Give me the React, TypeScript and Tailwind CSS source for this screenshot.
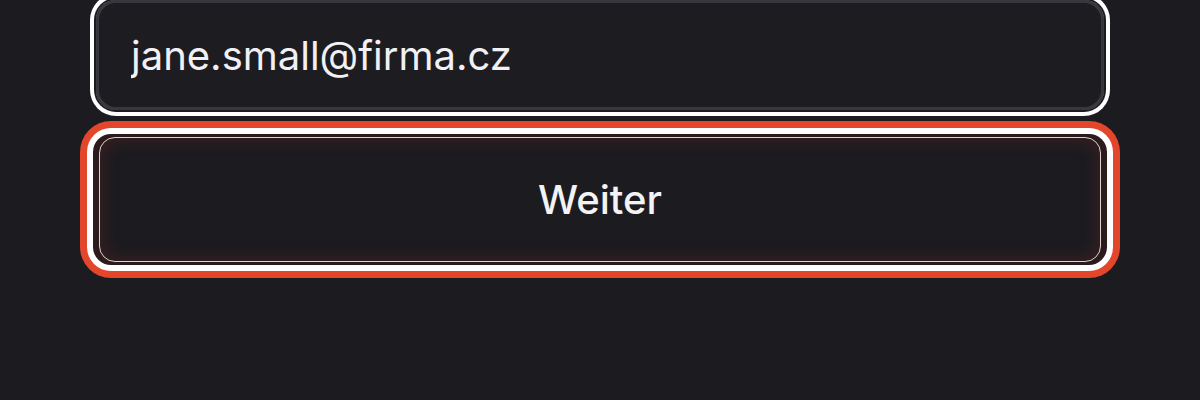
export default function App() {
  return (
    <div
      className="min-h-[400px] w-full bg-[#1c1b20]"
      style={{ fontFamily: "Inter, 'Noto Sans', sans-serif" }}
    >
      <div className="mx-auto flex w-[1014px] flex-col items-center gap-[24px]">
        <div className="w-[1008px] rounded-[20px] ring-4 ring-white ring-offset-2 ring-offset-[#1c1b20]">
          <input
            type="email"
            readOnly
            value="jane.small@firma.cz"
            className="h-[110px] w-full rounded-[20px] border-[3px] border-[#38373e] bg-[#1d1c21] px-[32px] text-[40px] text-[#f1f0f4] outline-none"
          />
        </div>
        <button
          type="button"
          className="h-[131px] w-[1014px] rounded-[18px] bg-[#2b1b1c] px-[6px] py-[3px] shadow-[0_0_0_6px_#ffffff,0_0_0_13px_#e4462b]"
        >
          <span className="flex h-full w-full items-center justify-center rounded-[16px] border-[1.5px] border-[#e2cfcf] bg-[#1c1b20] text-[40px] font-medium text-[#f3f2f5] shadow-[inset_0_0_18px_rgba(110,40,30,0.45)]">
            Weiter
          </span>
        </button>
      </div>
    </div>
  );
}
